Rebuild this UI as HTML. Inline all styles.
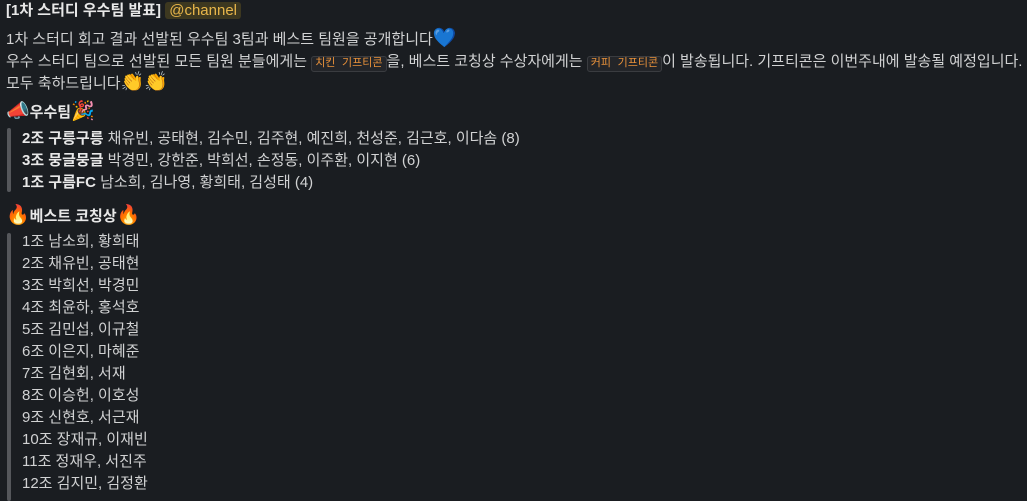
<!DOCTYPE html>
<html><head><meta charset="utf-8"><style>
body{margin:0;background:#1a1d21;color:#d1d2d3;font-family:"Liberation Sans","Noto Sans CJK KR",sans-serif;font-size:15px;width:1027px;height:501px;overflow:hidden}
.l{position:absolute;white-space:nowrap;line-height:22px}
b{color:#e8e8e8}
.m{background:#3d3820;color:#e8b64a;padding:0 4px;border-radius:3px}
code{font-family:"Liberation Mono","Noto Sans CJK KR",monospace;font-size:11px;color:#e8913a;background:#232529;border:1px solid #3a3c40;border-radius:3px;padding:1px 3px}
.bar{position:absolute;left:7px;width:4px;background:#55575b;border-radius:2px}
.e{font-size:19px;line-height:18px}
</style></head><body>
<div class="l" style="left:6px;top:0"><b>[1차 스터디 우수팀 발표]</b> <span class="m">@channel</span></div>
<div class="l" style="left:6px;top:29px">1차 스터디 회고 결과 선발된 우수팀 3팀과 베스트 팀원을 공개합니다<span class="e" style="color:#2f7ef5">💙</span></div>
<div class="l" style="left:6px;top:51px">우수 스터디 팀으로 선발된 모든 팀원 분들에게는 <code>치킨 기프티콘</code>을, 베스트 코칭상 수상자에게는 <code>커피 기프티콘</code>이 발송됩니다. 기프티콘은 이번주내에 발송될 예정입니다.</div>
<div class="l" style="left:6px;top:73px">모두 축하드립니다<span class="e">👏👏</span></div>
<div class="l" style="left:6px;top:102px"><span class="e">📣</span><b>우수팀</b><span class="e">🎉</span></div>
<div class="bar" style="top:128px;height:64px"></div>
<div class="l" style="left:22px;top:128px"><b>2조 구릉구릉</b> 채유빈, 공태현, 김수민, 김주현, 예진희, 천성준, 김근호, 이다솜 (8)</div>
<div class="l" style="left:22px;top:150px"><b>3조 뭉글뭉글</b> 박경민, 강한준, 박희선, 손정동, 이주환, 이지현 (6)</div>
<div class="l" style="left:22px;top:172px"><b>1조 구름FC</b> 남소희, 김나영, 황희태, 김성태 (4)</div>
<div class="l" style="left:6px;top:206px"><span class="e">🔥</span><b>베스트 코칭상</b><span class="e">🔥</span></div>
<div class="bar" style="top:233px;height:268px"></div>
<div class="l" style="left:22px;top:231px">1조 남소희, 황희태<br>2조 채유빈, 공태현<br>3조 박희선, 박경민<br>4조 최윤하, 홍석호<br>5조 김민섭, 이규철<br>6조 이은지, 마혜준<br>7조 김현회, 서재<br>8조 이승헌, 이호성<br>9조 신현호, 서근재<br>10조 장재규, 이재빈<br>11조 정재우, 서진주<br>12조 김지민, 김정환</div>
</body></html>
